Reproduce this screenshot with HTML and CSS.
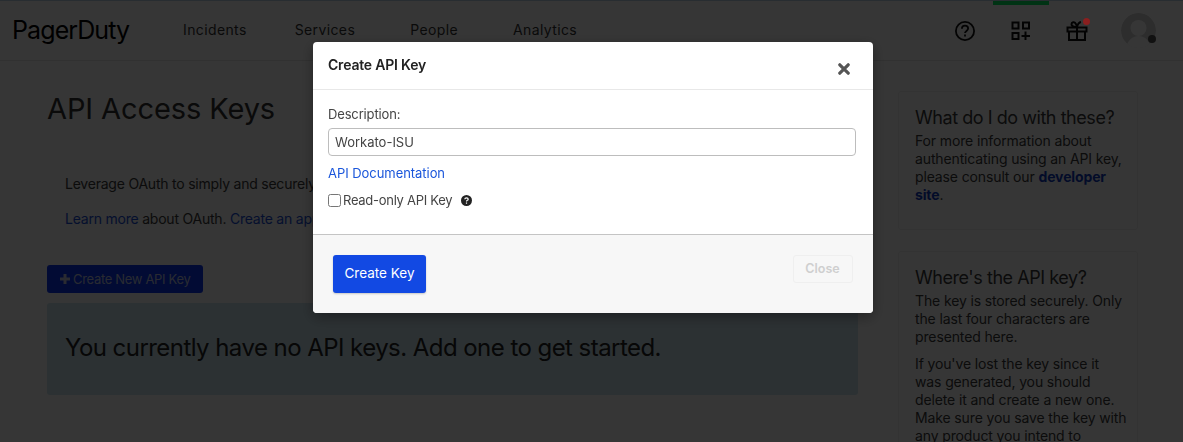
FILE: index.html
```html
<!DOCTYPE html>
<html lang="en">
<head>
  <meta charset="UTF-8">
  <meta name="viewport" content="width=device-width, initial-scale=1.0">
  <title>API Access Keys</title>
  <link rel="stylesheet" href="styles.css">
</head>
<body>
  <header class="topbar">
    <div class="logo">PagerDuty</div>
    <nav class="nav">
      <a class="nav-first" href="#">Incidents</a>
      <a href="#">Services</a>
      <a href="#">People</a>
      <a href="#">Analytics</a>
    </nav>
    <div class="tools">
      <a class="tool" href="#">
        <svg width="22" height="22" viewBox="0 0 22 22" fill="none" stroke="#111" stroke-width="1.8">
          <circle cx="11" cy="11" r="9.1"/>
          <path d="M7.9 8.700c0-1.800 1.400-3 3.100-3s3.100 1.100 3.100 2.800c0 2.400-3.100 2.400-3.100 4.600"/>
          <path d="M11 14.600v1.900"/>
        </svg>
      </a>
      <a class="tool tool-active" href="#">
        <svg width="20" height="20" viewBox="0 0 20 20" fill="none" stroke="#111" stroke-width="2">
          <rect x="1.500" y="1.500" width="6" height="6"/>
          <rect x="12" y="1.500" width="6" height="6"/>
          <rect x="1.500" y="12" width="6" height="6"/>
          <path d="M14.500 10.500v8.500M10.500 15h8.500"/>
        </svg>
      </a>
      <a class="tool tool-gift" href="#">
        <svg width="22" height="22" viewBox="0 0 22 22" fill="none" stroke="#111" stroke-width="2">
          <path d="M1.500 7.500h19v4h-19zM3 11.500V20h16v-8.500zM11 7.500V20"/>
          <path d="M11 7C9 7 5.500 6.500 5.500 4.200 5.500 2 8.500 1.500 9.500 3.200 10.500 4.800 11 7 11 7zM11 7c.5-2 1.500-4.500 4-5"/>
        </svg>
        <span class="badge"></span>
      </a>
      <a class="avatar" href="#">
        <svg width="35" height="35" viewBox="0 0 35 35">
          <clipPath id="avatar-clip"><circle cx="17.500" cy="17.500" r="17.500"/></clipPath>
          <g clip-path="url(#avatar-clip)">
            <circle cx="17.500" cy="17.500" r="17.500" fill="#d4d4d4"/>
            <circle cx="17.500" cy="15" r="8" fill="#fff"/>
            <path d="M5 35c1-7 6-12 12.500-12S29 28 30 35z" fill="#fff"/>
          </g>
        </svg>
        <span class="status"></span>
      </a>
    </div>
  </header>

  <div class="page">
    <main class="content">
      <h1>API Access Keys</h1>
      <div class="oauth">
        <p>Leverage OAuth to simply and securely connect your app with PagerDuty.</p>
        <p><a href="#">Learn more</a> about OAuth. <a href="#">Create an app</a> to get started.</p>
      </div>
      <a class="btn-new" href="#">
        <svg width="10" height="10" viewBox="0 0 10 10" fill="none" stroke="#c4cbe6" stroke-width="3"><path d="M5 0v10M0 5h10"/></svg>
        Create New API Key
      </a>
      <div class="empty">You currently have no API keys. Add one to get started.</div>
    </main>
    <aside class="side">
      <section class="card card-first">
        <h3>What do I do with these?</h3>
        <p>For more information about authenticating using an API key, please consult our <a href="#">developer site</a>.</p>
      </section>
      <section class="card">
        <h3>Where's the API key?</h3>
        <p>The key is stored securely. Only the last four characters are presented here.</p>
        <p>If you've lost the key since it was generated, you should delete it and create a new one. Make sure you save the key with any product you intend to</p>
      </section>
    </aside>
  </div>

  <div class="backdrop"></div>

  <div class="modal">
    <div class="modal-head">
      <h4>Create API Key</h4>
      <svg class="modal-x" width="12" height="12" viewBox="0 0 12 12" stroke="#555" stroke-width="3.200" stroke-linecap="round">
        <path d="M1.800 1.800l8.400 8.400M10.200 1.800l-8.400 8.400"/>
      </svg>
    </div>
    <div class="modal-body">
      <label class="field-label" for="desc">Description:</label>
      <input class="field" id="desc" type="text" value="Workato-ISU">
      <a class="doc-link" href="#">API Documentation</a>
      <div class="check-row">
        <input class="check" id="readonly" type="checkbox">
        <label for="readonly">Read-only API Key</label>
        <svg class="hint" width="11" height="11" viewBox="0 0 11 11">
          <circle cx="5.500" cy="5.500" r="5.500" fill="#222"/>
          <path d="M3.800 4.300c0-1 .8-1.500 1.700-1.500s1.700.5 1.700 1.400c0 1.200-1.700 1.100-1.700 2.200" fill="none" stroke="#fff" stroke-width="1.200"/>
          <rect x="4.900" y="7.500" width="1.200" height="1.200" fill="#fff"/>
        </svg>
      </div>
    </div>
    <div class="modal-foot">
      <button class="btn-create" type="button">Create Key</button>
      <button class="btn-close" type="button">Close</button>
    </div>
  </div>
</body>
</html>
```

FILE: styles.css
```css
html,
body {
  margin: 0;
  padding: 0;
  height: 442px;
  overflow: hidden;
}

body {
  font-family: Inter, "Liberation Sans", sans-serif;
  font-size: 14px;
  line-height: 18px;
  color: #3a3a3a;
  background: #fff;
}

a {
  color: #1a4fd8;
  text-decoration: none;
}

* {
  box-sizing: border-box;
}

/* top bar */
.topbar {
  height: 61px;
  display: flex;
  align-items: center;
  padding-left: 12px;
  border-top: 1px solid #bcd2e8;
  border-bottom: 1px solid #e6e6e6;
}

.logo {
  width: 171px;
  font-size: 25px;
  font-weight: 400;
  letter-spacing: -0.9px;
  color: #000;
  margin-top: -1px;
}

.nav {
  display: flex;
  gap: 55px;
  letter-spacing: 0.38px;
  margin-top: -2px;
  flex: 1;
}

.nav a {
  color: #333;
}

.nav .nav-first {
  margin-right: -7px;
}

.tools {
  display: flex;
  align-items: center;
  height: 100%;
  padding-right: 27px;
}

.tool {
  position: relative;
  width: 56px;
  height: 100%;
  display: flex;
  align-items: center;
  justify-content: center;
}

.tool-active {
  border-top: 4px solid #00f060;
}

.tool-active svg {
  margin-top: -3px;
}

.badge {
  position: absolute;
  z-index: 1;
  top: 17px;
  left: 34px;
  width: 7px;
  height: 7px;
  border-radius: 50%;
  background: #8a1f1f;
}

.avatar {
  position: relative;
  margin-left: 16px;
  width: 35px;
  height: 35px;
}

.status {
  position: absolute;
  z-index: 1;
  top: 22px;
  right: 0;
  width: 8px;
  height: 8px;
  border-radius: 50%;
  background: #111;
}

/* page */
.page {
  display: flex;
  padding: 30px 45px 0 47px;
  gap: 40px;
}

.content {
  width: 811px;
}

.content h1 {
  margin: 0 0 34px;
  font-size: 29px;
  line-height: 36px;
  font-weight: 400;
  letter-spacing: -0.1px;
  color: #333;
}

.oauth {
  height: 87px;
  padding: 14px 18px;
  background: #fcfcfc;
  margin-bottom: 17px;
  letter-spacing: -0.22px;
}

.oauth p {
  margin: 0 0 17px;
}

.btn-new {
  display: flex;
  align-items: center;
  gap: 3px;
  width: 156px;
  height: 28px;
  padding-left: 13px;
  border-radius: 3px;
  background: #0a35f5;
  color: #bfc8e8;
  font-size: 13px;
  letter-spacing: -0.32px;
  margin-bottom: 10px;
}

.empty {
  height: 92px;
  padding: 30px 18px;
  font-size: 24px;
  line-height: 30px;
  letter-spacing: -0.55px;
  border-radius: 3px;
  background: #cfe6f0;
  color: #222;
}

.side {
  width: 240px;
  flex: none;
}

.card {
  border: 1px solid #eee;
  border-radius: 3px;
  padding: 14px 10px 14px 16px;
  background: #fff;
  letter-spacing: -0.13px;
}

.card-first {
  height: 139px;
  margin-bottom: 21px;
}

.card h3 {
  margin: 0 0 2px;
  font-size: 18px;
  line-height: 24px;
  font-weight: 400;
  letter-spacing: -0.45px;
}

.card p {
  margin: 0 0 9px;
}

.card p a {
  font-weight: 700;
  color: #0f3cc0;
}

/* modal */
.backdrop {
  position: fixed;
  inset: 0;
  background: rgba(0, 0, 0, 0.79);
}

.modal {
  position: fixed;
  z-index: 2;
  top: 42px;
  left: 313px;
  width: 560px;
  height: 271px;
  display: flex;
  flex-direction: column;
  background: #fff;
  border-radius: 4px;
  box-shadow: 0 4px 14px rgba(0, 0, 0, 0.35);
  overflow: hidden;
}

.modal-head {
  height: 48px;
  display: flex;
  align-items: center;
  justify-content: space-between;
  padding: 0 23px 2px 15px;
  border-bottom: 1px solid #e8e8e8;
}

.modal-head h4 {
  margin: 0;
  font-size: 14px;
  font-weight: 600;
  letter-spacing: -0.2px;
  color: #222;
}

.modal-x {
  margin-top: 8px;
}

.modal-body {
  height: 145px;
  padding: 15px 17px 0 15px;
  font-size: 13px;
  color: #444;
  border-bottom: 1px solid #c4c4c4;
}

.field-label {
  display: block;
  margin-bottom: 5px;
  letter-spacing: -0.15px;
}

.field {
  display: block;
  width: 100%;
  height: 28px;
  padding: 0 6px;
  border: 1px solid #bdbdbd;
  border-radius: 4px;
  font: 13px Inter, "Liberation Sans", sans-serif;
  color: #444;
  background: #fff;
}

.doc-link {
  display: block;
  margin-top: 8px;
  letter-spacing: -0.05px;
  color: #1a56db;
}

.check-row {
  display: flex;
  align-items: center;
  margin-top: 9px;
  letter-spacing: -0.28px;
}

.check {
  width: 13px;
  height: 13px;
  margin: 0 2px 0 0;
}

.hint {
  margin-left: 9px;
}

.modal-foot {
  flex: 1;
  display: flex;
  align-items: flex-start;
  justify-content: space-between;
  padding: 20px 20px 0;
  background: #f7f7f7;
}

.btn-create {
  width: 93px;
  height: 38px;
  padding: 0 0 2px;
  border: 0;
  border-radius: 3px;
  background: #1249e3;
  color: #fff;
  font: 400 13.500px Inter, "Liberation Sans", sans-serif;
  box-shadow: 0 1px 2px rgba(0, 0, 0, 0.2);
}

.btn-close {
  width: 60px;
  height: 28px;
  padding: 0 1px 2px 0;
  border: 1px solid #efefef;
  border-radius: 3px;
  background: #f7f7f7;
  color: #cfcfcf;
  font: 600 12.500px Inter, "Liberation Sans", sans-serif;
}
```
